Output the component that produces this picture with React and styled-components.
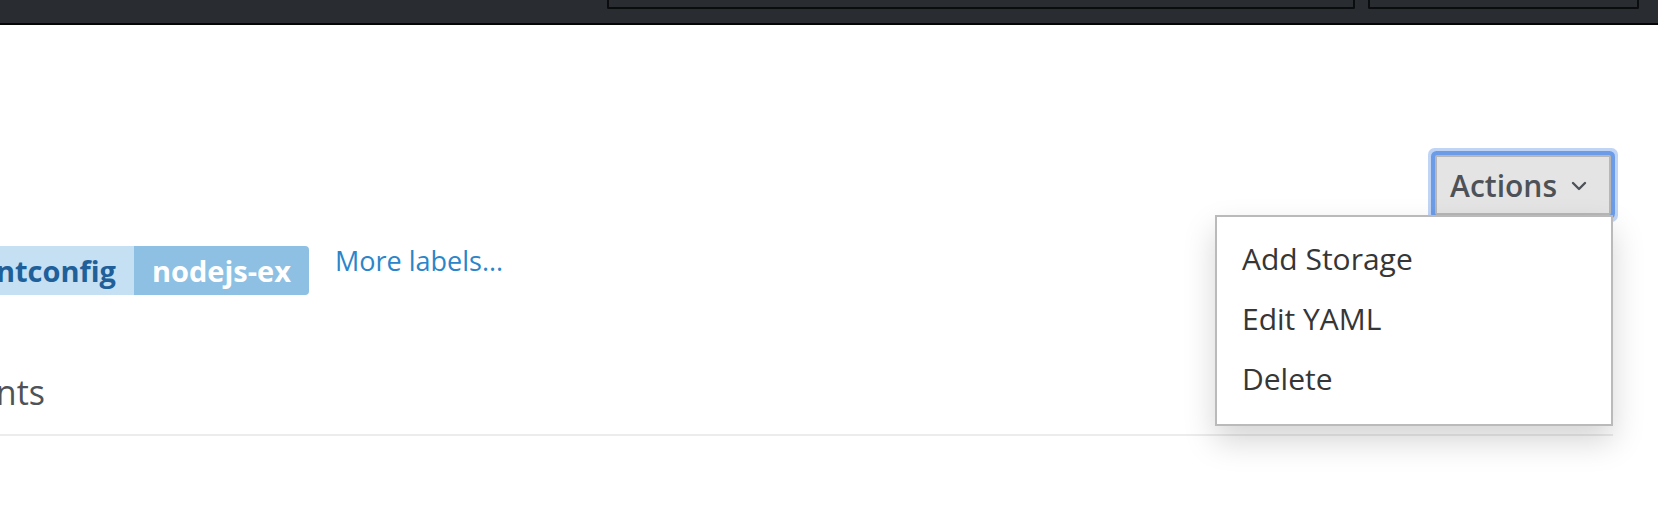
import React from "react";
import styled, { createGlobalStyle } from "styled-components";

const Global = createGlobalStyle`
  html, body { margin: 0; padding: 0; background: #fff; }
  body { font-family: "Open Sans", "Liberation Sans", sans-serif; overflow: hidden; }
`;

const Page = styled.div`
  width: 1658px;
  height: 528px;
  background: #fff;
  overflow: hidden;
`;

const TopBar = styled.div`
  background: #292d32;
  border-bottom: 2px solid #050505;
  display: flex;
  justify-content: flex-end;
  align-items: flex-end;
  gap: 13px;
  padding: 0 19px 14px 0;
  box-sizing: content-box;
  overflow: hidden;
  height: 9px;
`;

const SearchBox = styled.div`
  width: ${(p) => p.$w}px;
  height: 30px;
  flex: none;
  box-sizing: border-box;
  background: #292d32;
  border: 2px solid #0b0c0d;
  border-top: none;
  border-radius: 0 0 2px 2px;
`;

const Main = styled.div`
  padding-right: 45px;
`;

const HeaderRow = styled.div`
  display: flex;
  justify-content: flex-end;
  margin-top: 130px;
`;

const Dropdown = styled.div`
  position: relative;
  margin-right: 2px;
`;

const ActionsButton = styled.button`
  display: flex;
  align-items: center;
  gap: 14px;
  box-sizing: border-box;
  height: 60px;
  padding: 5px 22px 5px 13px;
  font-family: "Open Sans", "Liberation Sans", sans-serif;
  font-size: 30px;
  font-weight: 600;
  line-height: 45px;
  color: #4d5258;
  background: #e4e4e4;
  border: 2px solid #b7b7b7;
  border-radius: 2px;
  box-shadow: 0 0 0 4px #6c9ce8, 0 0 0 7px rgba(150, 185, 240, 0.6);
  cursor: pointer;
`;

const Caret = () => (
  <svg width="16" height="10" viewBox="0 0 16 10" style={{ marginTop: 2 }}>
    <polyline points="2,2 8,8 14,2" fill="none" stroke="#4d5258" strokeWidth="2.4" strokeLinecap="round" strokeLinejoin="round" />
  </svg>
);

const Menu = styled.ul`
  position: absolute;
  top: 100%;
  right: -2px;
  margin: 0;
  width: 398px;
  box-sizing: border-box;
  list-style: none;
  padding: 12px 0 15px;
  background: #fff;
  border: 2px solid #bababa;
  box-shadow: 0 15px 30px rgba(0, 0, 0, 0.17);
  z-index: 5;
`;

const MenuItem = styled.li`
  padding: 5px 25px;
  font-size: 30px;
  line-height: 50px;
  color: #363636;
  white-space: nowrap;
`;

const LabelsRow = styled.div`
  display: flex;
  align-items: flex-start;
  margin-top: 31px;
`;

const LabelGroup = styled.div`
  display: flex;
  height: 49px;
`;

const KeyClip = styled.div`
  width: 134px;
  overflow: hidden;
  display: flex;
  justify-content: flex-end;
`;

const LabelPart = styled.span`
  flex: none;
  display: flex;
  align-items: center;
  height: 49px;
  padding: 0 18px;
  font-size: 29px;
  font-weight: 700;
  line-height: 49px;
  white-space: nowrap;
  color: ${(p) => (p.$value ? "#ffffff" : "#20609a")};
  background: ${(p) => (p.$value ? "#8dc0e3" : "#c5e0f3")};
  border-radius: ${(p) => (p.$value ? "0 4px 4px 0" : "0")};
`;

const MoreLink = styled.a`
  margin-left: 26px;
  font-size: 27px;
  line-height: 30px;
  color: #2b85ca;
  text-decoration: none;
  white-space: nowrap;
`;

const TabBar = styled.div`
  margin-top: 75px;
  border-bottom: 2px solid #ececec;
  padding-bottom: 19px;
`;

const TabClip = styled.div`
  width: 45px;
  overflow: hidden;
  display: flex;
  justify-content: flex-end;
`;

const Tab = styled.span`
  flex: none;
  font-size: 34px;
  line-height: 45px;
  color: #4f5358;
  white-space: nowrap;
`;

export default function App() {
  return (
    <Page>
      <Global />
      <TopBar>
        <SearchBox $w={748} />
        <SearchBox $w={271} />
      </TopBar>
      <Main>
        <HeaderRow>
          <Dropdown>
            <ActionsButton>
              Actions <Caret />
            </ActionsButton>
            <Menu>
              <MenuItem>Add Storage</MenuItem>
              <MenuItem>Edit YAML</MenuItem>
              <MenuItem>Delete</MenuItem>
            </Menu>
          </Dropdown>
        </HeaderRow>
        <LabelsRow>
          <LabelGroup>
            <KeyClip>
              <LabelPart>deploymentconfig</LabelPart>
            </KeyClip>
            <LabelPart $value>nodejs-ex</LabelPart>
          </LabelGroup>
          <MoreLink href="#">More labels...</MoreLink>
        </LabelsRow>
        <TabBar>
          <TabClip>
            <Tab>Events</Tab>
          </TabClip>
        </TabBar>
      </Main>
    </Page>
  );
}
